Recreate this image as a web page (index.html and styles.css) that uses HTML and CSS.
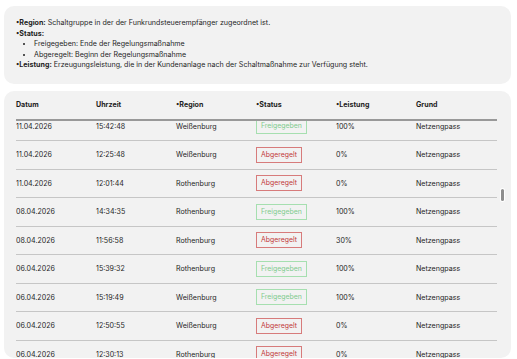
FILE: index.html
```html
<!DOCTYPE html>
<html lang="de">
<head>
<meta charset="utf-8">
<title>Regelungsmaßnahmen</title>
<link rel="stylesheet" href="styles.css">
</head>
<body>
<section class="legend">
  <p><b>•Region:</b> Schaltgruppe in der der Funkrundsteuerempfänger zugeordnet ist.</p>
  <p><b>•Status:</b></p>
  <ul>
    <li>Freigegeben: Ende der Regelungsmaßnahme</li>
    <li>Abgeregelt: Beginn der Regelungsmaßnahme</li>
  </ul>
  <p><b>•Leistung:</b> Erzeugungsleistung, die in der Kundenanlage nach der Schaltmaßnahme zur Verfügung steht.</p>
</section>
<section class="card">
  <div class="row head">
    <div>Datum</div><div>Uhrzeit</div><div>•Region</div><div>•Status</div><div>•Leistung</div><div>Grund</div>
  </div>
  <div class="rows">
    <div class="row"><div>11.04.2026</div><div>15:42:48</div><div>Weißenburg</div><div><span class="badge on">Freigegeben</span></div><div>100%</div><div>Netzengpass</div></div>
    <div class="row"><div>11.04.2026</div><div>12:25:48</div><div>Weißenburg</div><div><span class="badge off">Abgeregelt</span></div><div>0%</div><div>Netzengpass</div></div>
    <div class="row"><div>11.04.2026</div><div>12:01:44</div><div>Rothenburg</div><div><span class="badge off">Abgeregelt</span></div><div>0%</div><div>Netzengpass</div></div>
    <div class="row"><div>08.04.2026</div><div>14:34:35</div><div>Rothenburg</div><div><span class="badge on">Freigegeben</span></div><div>100%</div><div>Netzengpass</div></div>
    <div class="row"><div>08.04.2026</div><div>11:56:58</div><div>Rothenburg</div><div><span class="badge off">Abgeregelt</span></div><div>30%</div><div>Netzengpass</div></div>
    <div class="row"><div>06.04.2026</div><div>15:39:32</div><div>Rothenburg</div><div><span class="badge on">Freigegeben</span></div><div>100%</div><div>Netzengpass</div></div>
    <div class="row"><div>06.04.2026</div><div>15:19:49</div><div>Weißenburg</div><div><span class="badge on">Freigegeben</span></div><div>100%</div><div>Netzengpass</div></div>
    <div class="row"><div>06.04.2026</div><div>12:50:55</div><div>Weißenburg</div><div><span class="badge off">Abgeregelt</span></div><div>0%</div><div>Netzengpass</div></div>
    <div class="row"><div>06.04.2026</div><div>12:30:13</div><div>Rothenburg</div><div><span class="badge off">Abgeregelt</span></div><div>0%</div><div>Netzengpass</div></div>
    <div class="row"><div>05.04.2026</div><div>16:02:11</div><div>Rothenburg</div><div><span class="badge on">Freigegeben</span></div><div>100%</div><div>Netzengpass</div></div>
  </div>
  <div class="thumb"></div>
</section>
<script src="script.js"></script>
</body>
</html>
```

FILE: styles.css
```css
html, body { margin: 0; }
body {
  padding: 6px 6px 0 4px;
  font-family: Inter, "Noto Sans", sans-serif;
  font-size: 7.1px;
  color: #1e1e1e;
  background: #ffffff;
}
.legend {
  background: #f2f2f2;
  border-radius: 10px;
  padding: 12px 12px 13px;
  line-height: 10.5px;
}
.legend p { margin: 0; }
.legend b { font-weight: 700; }
.legend ul { margin: 0; padding-left: 18px; }
.legend li::marker { font-size: 6px; }
.card {
  position: relative;
  margin-top: 7px;
  background: #f2f2f2;
  border-radius: 10px;
  height: 267px;
  overflow: hidden;
  padding: 0 14px 0 12px;
}
.row {
  display: grid;
  grid-template-columns: repeat(6, 80px);
  align-items: center;
  height: 28.5px;
  box-sizing: border-box;
  border-bottom: 1px solid #c6c6c6;
}
.head {
  height: 30px;
  font-weight: 700;
  border-bottom: 2px solid #999999;
}
.rows {
  height: 237px;
  overflow-y: auto;
  scrollbar-width: none;
}
.rows::-webkit-scrollbar { display: none; }
.badge {
  display: inline-block;
  box-sizing: border-box;
  height: 16px;
  line-height: 14px;
  padding: 0 4px;
  font-size: 6.9px;
  border: 1px solid;
}
.badge.on { color: #7fcb8e; border-color: #a6dfb0; }
.badge.off { color: #c23a3a; border-color: #d77b7b; }
.thumb {
  position: absolute;
  right: 7px;
  top: 98px;
  width: 3px;
  height: 12px;
  background: #8e8e8e;
  border-radius: 2px;
  box-shadow: 0 0 0 1px #ffffff;
}
```

FILE: script.js
```js
document.querySelector('.rows').scrollTop = 8;
```
